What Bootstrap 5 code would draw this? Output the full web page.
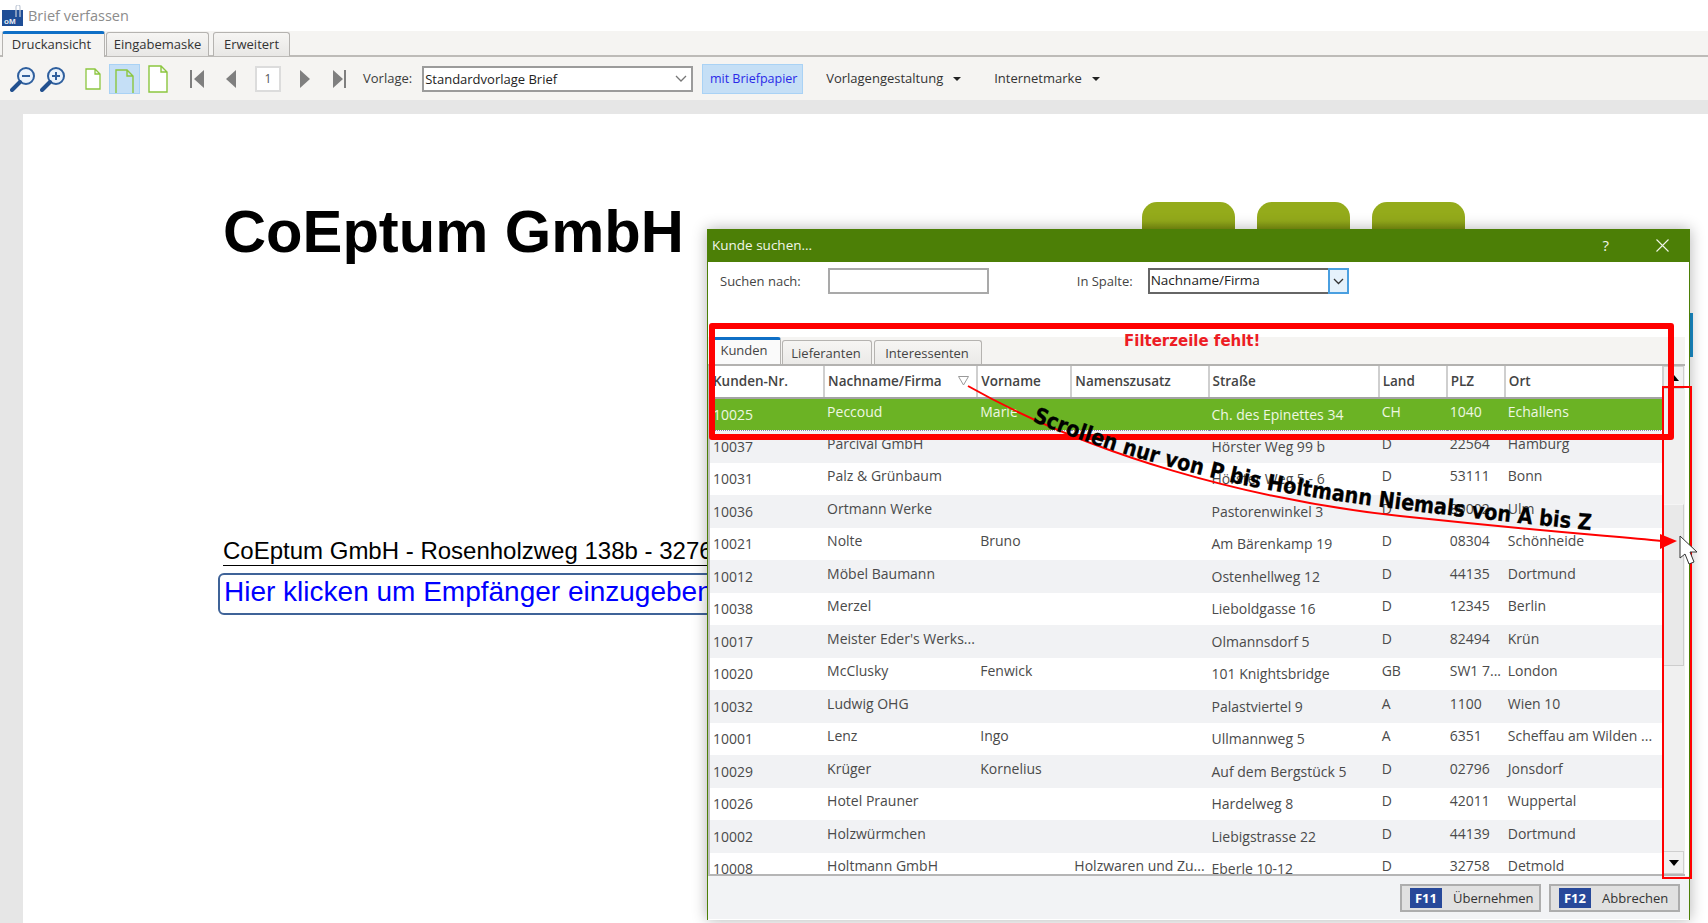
<!DOCTYPE html>
<html lang="de">
<head>
    <meta charset="UTF-8">
    <meta name="viewport" content="width=device-width, initial-scale=1.0">
    <title>Brief verfassen</title>
    <link href="https://cdn.jsdelivr.net/npm/bootstrap@5.3.0/dist/css/bootstrap.min.css" rel="stylesheet">
    <style>
        html, body { height: 100%; }
        body {
            position: relative;
            overflow: hidden;
            background: #e6e6e6;
            color: #3c3c3c;
            font-family: "Open Sans", "Noto Sans", sans-serif;
            font-size: 13px;
        }

        /* main window */
        .title-bar { height: 31px; background: #fff; padding-left: 2px; color: #8c8c8c; font-size: 14.5px; }
        .app-tabs { height: 26px; background: #f5f4f2; border-bottom: 2px solid #bdbbb8; padding-left: 2px; }
        .app-tab {
            height: 24px;
            margin-right: 1px;
            padding: 2px 0 0;
            text-align: center;
            background: linear-gradient(#f6f5f3, #e8e7e5);
            border: 1px solid #b5b3b0;
            border-bottom: 0;
            border-radius: 3px 3px 0 0;
            color: #333;
            margin-top: 1px;
        }
        .app-tab.on { height: 26px; margin-top: 0; background: #f5f4f2; border-top: 3px solid #0f6fc6; padding: 1px 4px 0 0; }
        .tool-bar { height: 43px; background: #f5f4f2; padding-left: 10px; }
        .tool-toggle { background: #c5dff6; border: 1px solid #a9d2f5; border-radius: 0; height: 30px; padding: 0; }
        .page-box { width: 26px; height: 26px; background: #fff; border: 2px solid #dcdcdc; color: #555; text-align: center; line-height: 21px; font-size: 12px; }
        .tpl-select { width: 271px; height: 26px; background: #fff; border: 2px solid #9b9b9b; padding-left: 1px; color: #222; line-height: 20px; }
        .brief-btn { width: 101px; height: 30px; padding: 2px 0 0 2px; background: #c5dff6; border: 1px solid #a9d2f5; border-radius: 0; color: #2a2ae8; font-size: 12.5px; }
        .tb-menu { color: #333; }
        .caret-down { display: inline-block; border: 4px solid transparent; border-top-color: #222; border-bottom: 0; margin-left: 10px; vertical-align: middle; }

        .letter-wrap { height: 823px; padding: 14px 0 0 23px; }
        .letter-page { height: 100%; background: #fff; padding-left: 200px; font-family: "Liberation Sans", Arial, sans-serif; color: #000; }
        .firm-name { font-size: 59.7px; font-weight: 700; line-height: 69px; padding-top: 83px; margin: 0; }
        .sender-line { margin-top: 270px; font-size: 24px; line-height: 29px; white-space: nowrap; border-bottom: 1px solid #000; width: 600px; }
        .recipient-box { margin: 7px 0 0 -5px; width: 640px; height: 42px; border: 2px solid #3f6398; border-radius: 6px; color: #0000ff; font-size: 28px; line-height: 34px; padding-left: 4px; white-space: nowrap; }

        .green-tabs { position: absolute; left: 1142px; top: 202px; gap: 22px; }
        .green-tab { width: 93px; height: 27px; border-radius: 15px 15px 0 0; background: linear-gradient(#94ab1b 70%, #7f9412); }
        .blue-sliver { position: absolute; left: 1690px; top: 313px; width: 3px; height: 44px; background: #1a8dc9; }

        /* dialog */
        .search-dlg {
            position: absolute;
            left: 707px;
            top: 229px;
            width: 983px;
            height: 691px;
            background: #fff;
            border: 1px solid #4c7f06;
            border-top: 0;
            border-bottom: 0;
            box-shadow: 0 0 14px rgba(0, 0, 0, .3);
        }
        .dlg-title { height: 33px; background: #4c7f06; color: #f1f6ea; padding: 0 20px 0 4px; font-size: 13.5px; }
        .dlg-search { height: 75px; padding: 6px 0 0 12px; color: #444; font-size: 13px; }
        .search-input { width: 161px; height: 26px; margin-left: 27px; border: 2px solid #a9a9a9; background: #fff; }
        .col-label { margin-left: 88px; }
        .col-select { width: 180px; height: 26px; margin-left: 15px; border: 2px solid #666; border-right: 0; color: #222; line-height: 21px; padding-left: 1px; font-size: 13.5px; }
        .col-drop { width: 21px; height: 26px; background: #e5f1fb; border: 2px solid #4a9fe0; }
        .dlg-tabs { height: 29px; background: #f5f4f2; border-bottom: 2px solid #b3b2b0; padding-left: 1px; width: 977px; }
        .dlg-tab { height: 24px; margin: 3px 2px 0 0; padding-right: 2px; background: linear-gradient(#f6f5f3, #ebeae8); border: 1px solid #b5b3b0; border-bottom: 0; border-radius: 3px 3px 0 0; text-align: center; line-height: 24px; color: #444; }
        .dlg-tab.on { height: 27px; margin-top: 0; background: #fafafa; border-top: 3px solid #0f6fc6; line-height: 21px; margin-right: 1px; }
        .grid-wrap { position: relative; width: 977px; height: 510px; overflow: hidden; border-bottom: 2px solid #b5b5b5; border-left: 2px solid #c0c0c0; }
        .kunden-grid { table-layout: fixed; width: 954px; margin: 0; font-size: 14px; color: #444; }
        .kunden-grid th, .kunden-grid td { padding: 0 0 0 3px; border: 0; white-space: nowrap; overflow: hidden; background: transparent; box-shadow: none; color: #4a4a4a; font-weight: 400; }
        .kunden-grid th { height: 32px; padding-left: 3px; font-weight: 600; font-size: 13.5px; background: #fff; color: #444; border-right: 2px solid #cfcfcf; border-bottom: 2px solid #a3a3a3; position: relative; vertical-align: middle; }
        .kunden-grid td { height: 32.5px; padding-bottom: 6px; vertical-align: middle; }
        .kunden-grid td.low { padding-bottom: 0; }
        .kunden-grid tbody tr:nth-child(odd) td { background: #fff; }
        .kunden-grid tbody tr:nth-child(even) td { background: #f1f2f4; }
        .kunden-grid tbody tr.picked td { background: #6bb324; color: #eef7e2; border-top: 1px dotted #8a7fb0; border-bottom: 1px dotted #8a7fb0; height: 32px; }
        .sort-mark { position: absolute; left: 133px; top: 10px; }
        .v-scroll { position: absolute; left: 953px; top: 0; width: 22px; height: 100%; background: #f0f0f0; }
        .sb-btn { position: absolute; left: 0; width: 21px; height: 23px; background: #f1f1f1; border: 1px solid #cfcfcf; text-align: center; line-height: 0; }
        .sb-up { top: 0; }
        .sb-down { bottom: 0; }
        .sb-thumb { position: absolute; left: 0; top: 138px; width: 21px; height: 162px; background: #e9e9e9; border: 1px solid #cdcdcd; border-top-color: #f5f5f5; }
        .tri { display: inline-block; border-left: 5px solid transparent; border-right: 5px solid transparent; }
        .tri-down { border-top: 6px solid #000; margin-top: 8px; }
        .tri-up { border-bottom: 6px solid #000; margin-top: 8px; }
        .dlg-foot { height: 43px; background: #f2f3f5; padding: 8px 9px 0 0; width: 981px; }
        .foot-btn { height: 28px; padding: 0 0 0 8px; background: #e1e1e1; border: 2px solid #adadad; border-radius: 0; color: #333; font-size: 13px; white-space: nowrap; text-align: left; line-height: 20px; }
        .foot-key { display: inline-block; width: 32px; height: 20px; background: #28499a; color: #fff; font-weight: 700; font-size: 13px; line-height: 20px; text-align: center; margin-right: 11px; }

        /* annotations lying over the window */
        .notes { position: absolute; left: 0; top: 0; width: 1708px; height: 923px; pointer-events: none; }
        .note-box { position: absolute; border-style: solid; border-color: #f00; }
        .note-main { left: 709px; top: 323px; width: 965px; height: 117px; border-width: 6px; border-radius: 3px; }
        .note-side { left: 1662px; top: 386px; width: 30px; height: 493px; border-width: 2px; }
        .note-missing { position: absolute; left: 1124px; top: 331px; color: #ed1c24; font: 700 15px/20px "DejaVu Sans", sans-serif; white-space: nowrap; }
        .note-text { font: 700 22px "DejaVu Sans", sans-serif; fill: #000; stroke: #000; stroke-width: .3px; }
    </style>
</head>
<body>
    <div class="title-bar d-flex align-items-center gap-1">
        <svg width="22" height="21" viewBox="0 0 22 21"><rect y="5" width="21" height="16" fill="#1f4e96"/><path d="M14 12V2a2 2 0 0 1 4 0v10" fill="none" stroke="#c3cbd8" stroke-width="1.2"/><text x="2" y="19" font-family="Liberation Sans" font-weight="700" font-size="8" fill="#e8edf5">oM</text></svg>
        <span>Brief verfassen</span>
    </div>

    <div class="app-tabs d-flex align-items-start">
        <div class="app-tab on" style="width:103px">Druckansicht</div>
        <div class="app-tab" style="width:103px">Eingabemaske</div>
        <div class="app-tab" style="width:77px;margin-left:3px">Erweitert</div>
    </div>

    <div class="tool-bar d-flex align-items-center">
        <svg width="26" height="26" viewBox="0 0 26 26"><circle cx="16" cy="10" r="8" fill="#eaf2fb" stroke="#2f5f9e" stroke-width="2"/><path d="M12 10h8" stroke="#2f5f9e" stroke-width="2"/><path d="M10 16 2 24" stroke="#23518f" stroke-width="4" stroke-linecap="round"/></svg>
        <svg class="ms-1" width="26" height="26" viewBox="0 0 26 26"><circle cx="16" cy="10" r="8" fill="#eaf2fb" stroke="#2f5f9e" stroke-width="2"/><path d="M12 10h8M16 6v8" stroke="#2f5f9e" stroke-width="2"/><path d="M10 16 2 24" stroke="#23518f" stroke-width="4" stroke-linecap="round"/></svg>
        <svg style="margin-left:19px" width="16" height="22" viewBox="0 0 16 22"><path d="M1 1h9l5 5v15H1z M10 1v5h5" fill="#fff" stroke="#8cc63f" stroke-width="1.3"/></svg>
        <button type="button" class="btn tool-toggle ms-2 d-flex justify-content-center align-items-end" style="width:31px"><svg width="20" height="25" viewBox="0 0 20 25"><path d="M1 25V2h11l6 6v17M12 2v6h6" fill="none" stroke="#8cc63f" stroke-width="1.4"/></svg></button>
        <svg style="margin-left:8px" width="20" height="28" viewBox="0 0 20 28"><path d="M1 1h12l6 6v20H1z M13 1v6h6" fill="#fff" stroke="#8cc63f" stroke-width="1.4"/></svg>

        <svg style="margin-left:21px" width="16" height="18" viewBox="0 0 16 18"><path d="M1 0h2v18H1zM15 0v18L5 9z" fill="#7f7f7f"/></svg>
        <svg style="margin-left:20px" width="12" height="18" viewBox="0 0 12 18"><path d="M11 0v18L1 9z" fill="#7f7f7f"/></svg>
        <div class="page-box" style="margin-left:18px">1</div>
        <svg style="margin-left:18px" width="12" height="18" viewBox="0 0 12 18"><path d="M1 0v18l10-9z" fill="#7f7f7f"/></svg>
        <svg style="margin-left:21px" width="15" height="18" viewBox="0 0 15 18"><path d="M1 0v18l10-9zM12 0h2v18h-2z" fill="#7f7f7f"/></svg>

        <span style="margin-left:16px">Vorlage:</span>
        <div class="tpl-select d-flex justify-content-between align-items-center" style="margin-left:10px">
            <span>Standardvorlage Brief</span>
            <svg class="me-1" width="12" height="8" viewBox="0 0 12 8"><path d="M1 1l5 5 5-5" fill="none" stroke="#777" stroke-width="1.3"/></svg>
        </div>
        <button type="button" class="btn brief-btn" style="margin-left:9px">mit Briefpapier</button>
        <span class="tb-menu" style="margin-left:23px">Vorlagengestaltung<i class="caret-down"></i></span>
        <span class="tb-menu" style="margin-left:33px">Internetmarke<i class="caret-down"></i></span>
    </div>

    <div class="letter-wrap">
        <div class="letter-page">
            <h1 class="firm-name">CoEptum GmbH</h1>
            <div class="sender-line">CoEptum GmbH - Rosenholzweg 138b - 32760 Detmold</div>
            <div class="recipient-box">Hier klicken um Empfänger einzugeben</div>
        </div>
    </div>

    <div class="green-tabs d-flex">
        <div class="green-tab"></div>
        <div class="green-tab"></div>
        <div class="green-tab"></div>
    </div>
    <div class="blue-sliver"></div>

    <div class="search-dlg">
        <div class="dlg-title d-flex align-items-center justify-content-between">
            <span>Kunde suchen...</span>
            <span class="d-flex align-items-center" style="gap:47px">
                <span style="font-size:15px">?</span>
                <svg width="13" height="13" viewBox="0 0 13 13"><path d="M.5.5l12 12M12.5.5l-12 12" stroke="#f1f6ea" stroke-width="1.1"/></svg>
            </span>
        </div>

        <div class="dlg-search d-flex align-items-start">
            <span style="line-height:26px">Suchen nach:</span>
            <div class="search-input"></div>
            <span class="col-label" style="line-height:26px">In Spalte:</span>
            <div class="col-select">Nachname/Firma</div>
            <div class="col-drop d-flex align-items-center justify-content-center"><svg width="11" height="7" viewBox="0 0 11 7"><path d="M1 1l4.5 4.5L10 1" fill="none" stroke="#333" stroke-width="1.3"/></svg></div>
        </div>

        <div class="dlg-tabs d-flex align-items-start">
            <div class="dlg-tab on" style="width:72px">Kunden</div>
            <div class="dlg-tab" style="width:90px">Lieferanten</div>
            <div class="dlg-tab" style="width:108px">Interessenten</div>
        </div>

        <div class="grid-wrap">
            <table class="table kunden-grid">
                <colgroup>
                    <col style="width:114px"><col style="width:153px"><col style="width:94px"><col style="width:137px">
                    <col style="width:170px"><col style="width:68px"><col style="width:58px"><col style="width:158px">
                </colgroup>
                <thead>
                    <tr>
                        <th>Kunden-Nr.</th>
                        <th>Nachname/Firma<svg class="sort-mark" width="11" height="10" viewBox="0 0 11 10"><path d="M.5.5h10L5.5 9z" fill="none" stroke="#999"/></svg></th>
                        <th>Vorname</th><th>Namenszusatz</th><th>Straße</th><th>Land</th><th>PLZ</th><th>Ort</th>
                    </tr>
                </thead>
                <tbody id="rows"></tbody>
            </table>
            <div class="v-scroll">
                <div class="sb-btn sb-up"><i class="tri tri-up"></i></div>
                <div class="sb-thumb"></div>
                <div class="sb-btn sb-down"><i class="tri tri-down"></i></div>
            </div>
        </div>

        <div class="dlg-foot d-flex justify-content-end gap-2">
            <button type="button" class="btn foot-btn" style="width:141px"><span class="foot-key">F11</span>Übernehmen</button>
            <button type="button" class="btn foot-btn" style="width:131px"><span class="foot-key">F12</span>Abbrechen</button>
        </div>
    </div>

    <div class="note-box note-main"></div>
    <div class="note-box note-side"></div>
    <div class="note-missing">Filterzeile fehlt!</div>
    <svg class="notes" viewBox="0 0 1708 923">
        <defs><path id="textLine" d="M1032,421 C1100,450 1180,470 1230,482 S1400,512 1600,531"/></defs>
        <path d="M968,386 C1090,455 1250,500 1400,516 S1600,535 1662,541" fill="none" stroke="#f00" stroke-width="2"/>
        <path d="M1660,534 L1677,541 L1660,549 Z" fill="#f00"/>
        <text class="note-text"><textPath href="#textLine" textLength="572" lengthAdjust="spacingAndGlyphs">Scrollen nur von P bis Holtmann Niemals von A bis Z</textPath></text>
        <path d="M1680,536 L1680,558 L1685,554 L1689,564 L1694,562 L1690,552 L1697,552 Z" fill="#fff" stroke="#333" stroke-width="1"/>
    </svg>

    <script src="https://cdn.jsdelivr.net/npm/bootstrap@5.3.0/dist/js/bootstrap.bundle.min.js"></script>
    <script>
        const kunden = [
            ['10025', 'Peccoud', 'Marie', '', 'Ch. des Epinettes 34', 'CH', '1040', 'Echallens'],
            ['10037', 'Parcival GmbH', '', '', 'Hörster Weg 99 b', 'D', '22564', 'Hamburg'],
            ['10031', 'Palz & Grünbaum', '', '', 'Hörster Weg 5 - 6', 'D', '53111', 'Bonn'],
            ['10036', 'Ortmann Werke', '', '', 'Pastorenwinkel 3', 'D', '89002', 'Ulm'],
            ['10021', 'Nolte', 'Bruno', '', 'Am Bärenkamp 19', 'D', '08304', 'Schönheide'],
            ['10012', 'Möbel Baumann', '', '', 'Ostenhellweg 12', 'D', '44135', 'Dortmund'],
            ['10038', 'Merzel', '', '', 'Lieboldgasse 16', 'D', '12345', 'Berlin'],
            ['10017', "Meister Eder's Werks...", '', '', 'Olmannsdorf 5', 'D', '82494', 'Krün'],
            ['10020', 'McClusky', 'Fenwick', '', '101 Knightsbridge', 'GB', 'SW1 7...', 'London'],
            ['10032', 'Ludwig OHG', '', '', 'Palastviertel 9', 'A', '1100', 'Wien 10'],
            ['10001', 'Lenz', 'Ingo', '', 'Ullmannweg 5', 'A', '6351', 'Scheffau am Wilden ...'],
            ['10029', 'Krüger', 'Kornelius', '', 'Auf dem Bergstück 5', 'D', '02796', 'Jonsdorf'],
            ['10026', 'Hotel Prauner', '', '', 'Hardelweg 8', 'D', '42011', 'Wuppertal'],
            ['10002', 'Holzwürmchen', '', '', 'Liebigstrasse 22', 'D', '44139', 'Dortmund'],
            ['10008', 'Holtmann GmbH', '', 'Holzwaren und Zu...', 'Eberle 10-12', 'D', '32758', 'Detmold']
        ];

        const tbody = document.getElementById('rows');
        kunden.forEach((k, i) => {
            const tr = document.createElement('tr');
            if (i === 0) tr.className = 'picked';
            k.forEach((v, c) => {
                const td = document.createElement('td');
                if (c === 0 || c === 4) td.className = 'low';
                td.textContent = v;
                tr.appendChild(td);
            });
            tbody.appendChild(tr);
        });
    </script>
</body>
</html>
